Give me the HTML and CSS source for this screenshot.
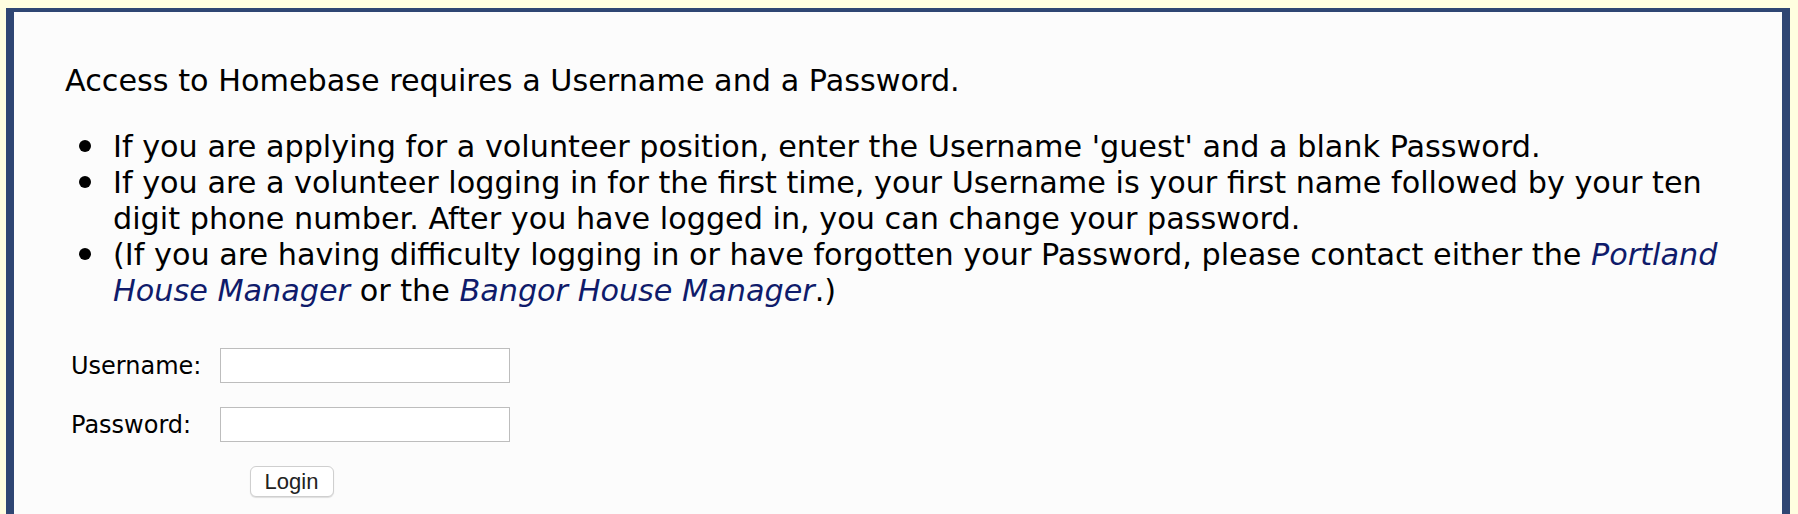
FILE: index.html
```html
<!DOCTYPE html>
<html>
<head>
<meta charset="utf-8">
<link rel="stylesheet" href="styles.css">
<title>Homebase Login</title>
</head>
<body>
<div class="frame">
  <div class="content">
    <p class="intro">Access to Homebase requires a Username and a Password.</p>
    <ul class="notes">
      <li>If you are applying for a volunteer position, enter the Username 'guest' and a blank Password.</li>
      <li>If you are a volunteer logging in for the first time, your Username is your first name followed by your ten digit phone number. After you have logged in, you can change your password.</li>
      <li>(If you are having difficulty logging in or have forgotten your Password, please contact either the <a class="mgr" href="#">Portland House Manager</a> or the <a class="mgr" href="#">Bangor House Manager</a>.)</li>
    </ul>
    <form class="login">
      <label class="lbl" for="u">Username:</label>
      <input class="field" id="u" type="text">
      <label class="lbl" for="p">Password:</label>
      <input class="field" id="p" type="password">
      <button class="btn" type="button">Login</button>
    </form>
  </div>
</div>
</body>
</html>
```
FILE: styles.css
```css
html, body {
  margin: 0;
  height: 100%;
}
body {
  background: #fffee0;
  font-family: "DejaVu Sans", Verdana, sans-serif;
  color: #000;
  overflow: hidden;
}
.frame {
  margin: 8px 8px 0 6px;
  border-style: solid;
  border-color: #2f4673;
  border-width: 4px 8px 0 8px;
  background: #fcfcfc;
  min-height: 600px;
}
.content {
  padding: 51px 0 0 51px;
}
.intro {
  margin: 0;
  font-size: 30.25px;
  line-height: 36px;
}
.notes {
  margin: 30px 18px 0 0;
  padding-left: 48px;
  font-size: 30.25px;
  line-height: 36px;
  list-style: none;
}
.notes li::before {
  content: "";
  display: inline-block;
  width: 12px;
  height: 12px;
  border-radius: 50%;
  background: #000;
  margin-left: -34px;
  margin-right: 22px;
  vertical-align: 5px;
}
.mgr {
  color: #0f1b6b;
  font-style: italic;
  text-decoration: none;
}
.login {
  display: grid;
  grid-template-columns: 149px 290px;
  row-gap: 24px;
  align-items: center;
  margin: 39px 0 0 6px;
  width: 439px;
}
.lbl {
  font-size: 24px;
  line-height: 28px;
}
.field {
  box-sizing: border-box;
  width: 290px;
  height: 35px;
  margin: 0;
  border: 1px solid #bdbdbd;
  border-radius: 0;
  background: #fff;
  padding: 0 6px;
}
.btn {
  grid-column: 1 / span 2;
  justify-self: center;
  margin-left: 2px;
  box-sizing: border-box;
  width: 84px;
  height: 31px;
  padding: 0;
  font-family: "Liberation Sans", Arial, sans-serif;
  font-size: 22px;
  color: #222;
  background: #fff;
  border: 1px solid #cfcfcf;
  border-radius: 6px;
  box-shadow: 0 1px 1px rgba(0,0,0,0.12);
}
```
